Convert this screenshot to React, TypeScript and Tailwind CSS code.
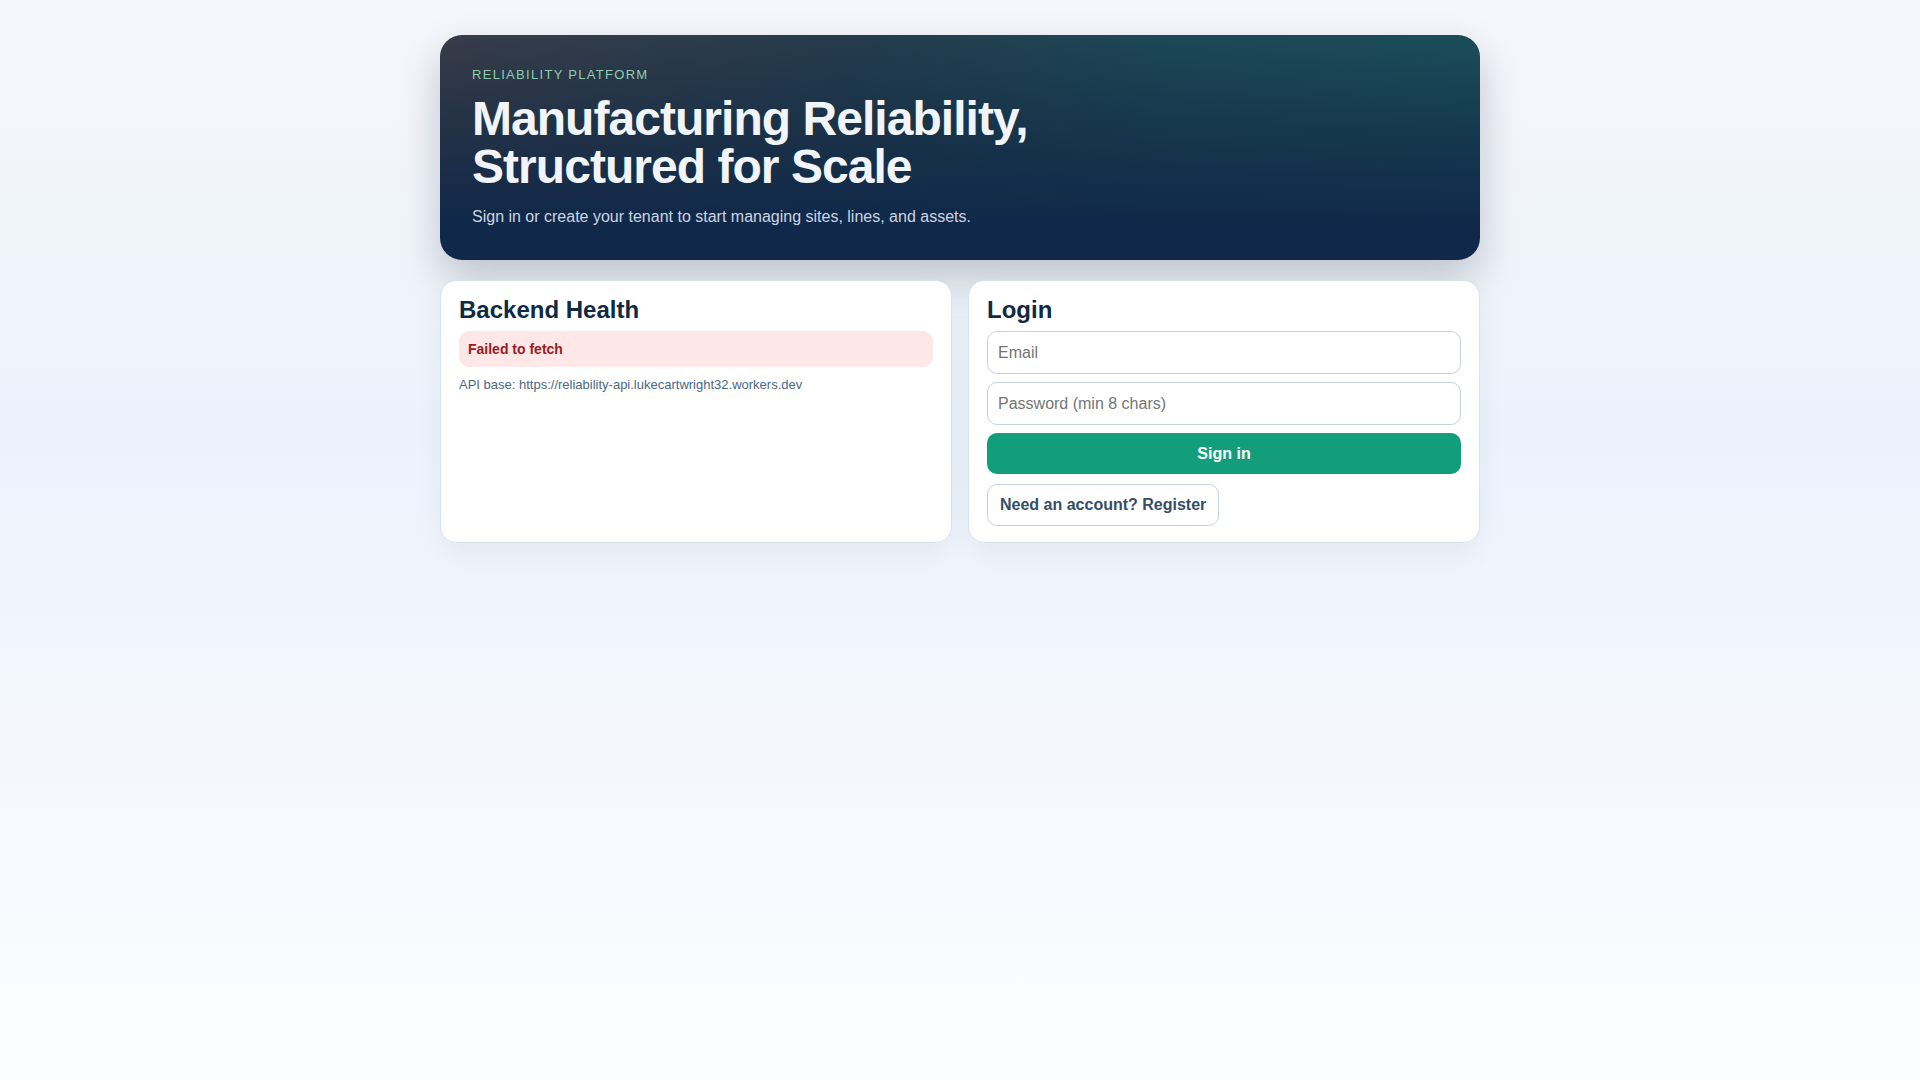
import React from 'react'

function HealthCard() {
  return (
    <section className="rounded-2xl border border-[#d9e2ec] bg-white px-[18px] pt-[17px] pb-[16px] shadow-[0_10px_30px_rgba(15,23,42,0.05)]">
      <h2 className="mb-[9px] text-2xl font-bold leading-none text-[#102a43]">Backend Health</h2>
      <div className="rounded-[10px] bg-[#fde7e7] px-[9px] py-2 text-sm font-bold leading-5 text-[#9b1c1c]">
        Failed to fetch
      </div>
      <p className="mt-2 text-[13px] leading-5 text-[#4a6888]">
        API base: https://reliability-api.lukecartwright32.workers.dev
      </p>
    </section>
  )
}

function LoginCard() {
  return (
    <section className="rounded-2xl border border-[#d9e2ec] bg-white px-[18px] pt-[17px] pb-[16px] shadow-[0_10px_30px_rgba(15,23,42,0.05)]">
      <h2 className="mb-[9px] text-2xl font-bold leading-none text-[#102a43]">Login</h2>
      <form className="flex flex-col gap-2" onSubmit={(e) => e.preventDefault()}>
        <input
          type="email"
          placeholder="Email"
          className="h-[43px] w-full rounded-[10px] border border-[#c6d2e0] bg-white px-[10px] text-base text-[#102a43] outline-none placeholder:text-[#757575]"
        />
        <input
          type="password"
          placeholder="Password (min 8 chars)"
          className="h-[43px] w-full rounded-[10px] border border-[#c6d2e0] bg-white px-[10px] text-base text-[#102a43] outline-none placeholder:text-[#757575]"
        />
        <button
          type="submit"
          className="h-[41px] w-full rounded-[10px] bg-[#139e7b] text-base font-bold text-white"
        >
          Sign in
        </button>
      </form>
      <button
        type="button"
        className="mt-[10px] h-[42px] rounded-[10px] border border-[#c6d2e0] bg-white px-3 text-base font-bold text-[#334e68]"
      >
        Need an account? Register
      </button>
    </section>
  )
}

export default function App() {
  return (
    <div className="min-h-screen bg-linear-to-b from-[#f5f7fb] via-[#ecf2fc] via-40% to-[#fcfdff] font-['Liberation_Sans',Arial,sans-serif]">
      <main className="mx-auto w-[1040px] pt-[35px]">
        <header className="rounded-[22px] bg-[image:linear-gradient(180deg,rgba(15,39,68,0)_0%,rgba(15,39,68,0.55)_45%,#10284a_85%),linear-gradient(90deg,#383c48_0%,#243c4c_40%,#1d4856_70%,#1c4d5a_100%)] px-8 pt-8 pb-[31px] shadow-[0_18px_40px_rgba(15,23,42,0.22)]">
          <p className="mb-3 text-[13px] leading-4 tracking-widest text-[#8ecdb2]">RELIABILITY PLATFORM</p>
          <h1 className="mb-[14px] text-5xl font-bold leading-none tracking-[-0.02em] text-[#f1f5f9]">
            Manufacturing Reliability,
            <br />
            Structured for Scale
          </h1>
          <p className="text-base leading-6 text-[#cbd5e1]">
            Sign in or create your tenant to start managing sites, lines, and assets.
          </p>
        </header>

        <div className="mt-5 grid grid-cols-2 gap-4">
          <HealthCard />
          <LoginCard />
        </div>
      </main>
    </div>
  )
}
